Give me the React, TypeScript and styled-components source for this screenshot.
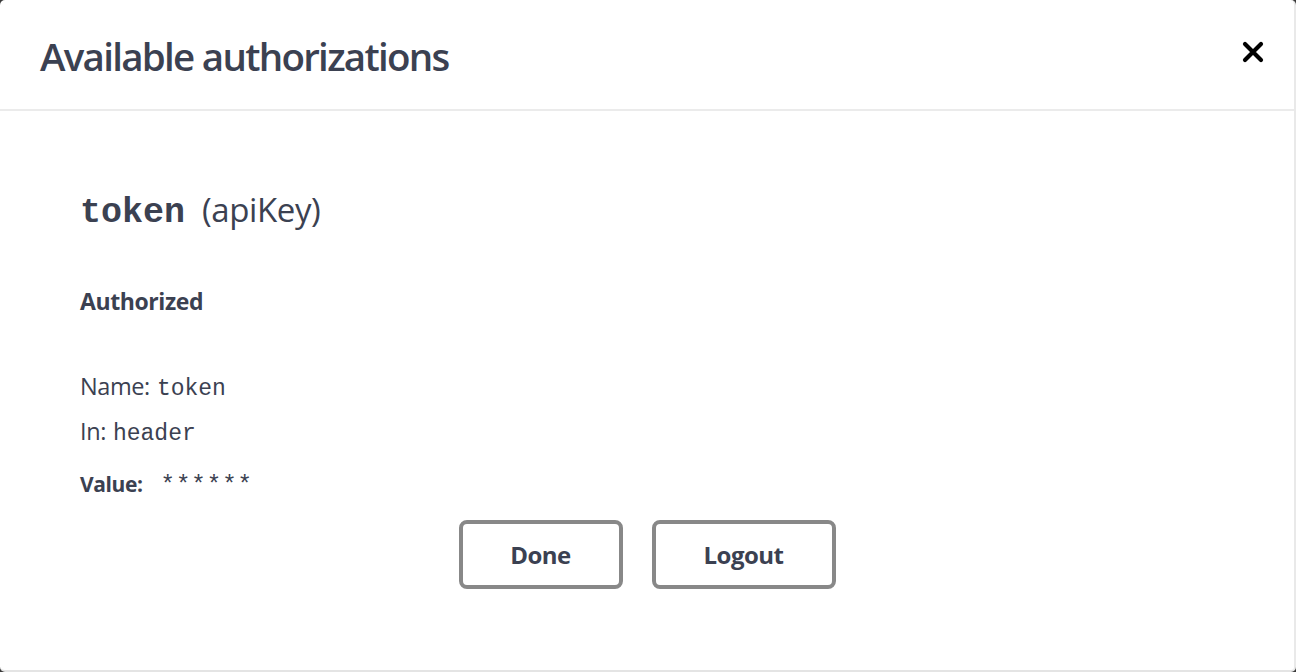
import React from "react";
import styled, { createGlobalStyle } from "styled-components";

const Global = createGlobalStyle`
  html, body { margin: 0; padding: 0; background: #3a3a3a; }
  body { width: 1296px; height: 672px; overflow: hidden; }
  * { box-sizing: border-box; }
`;

const Modal = styled.div`
  width: 1296px;
  height: 672px;
  background: #fff;
  border-radius: 5px;
  border-right: 2px solid #e9e9e9;
  border-bottom: 2px solid #e4e4e4;
  display: flex;
  flex-direction: column;
  color: #3b4151;
  font-family: "Open Sans", "Noto Sans", sans-serif;
`;

const Header = styled.div`
  height: 111px;
  flex: none;
  display: flex;
  align-items: center;
  justify-content: space-between;
  padding: 0 29px 0 40px;
  border-bottom: 2px solid #ebebeb;
`;

const Title = styled.h3`
  margin: 2px 0 0 0;
  font-size: 38.5px;
  font-weight: 600;
  letter-spacing: -1.72px;
  color: #3b4151;
`;

const CloseButton = styled.button`
  border: none;
  background: none;
  padding: 0;
  margin-bottom: 6px;
  width: 24px;
  height: 24px;
  display: flex;
  align-items: center;
  justify-content: center;
  cursor: pointer;
`;

const Content = styled.div`
  padding: 79px 80px 0 80px;
  display: flex;
  flex-direction: column;
`;

const SchemeTitle = styled.h4`
  margin: 0;
  font-size: 33px;
  font-weight: 400;
  display: flex;
  align-items: baseline;
  gap: 17px;
  line-height: 40px;
  letter-spacing: -0.4px;
`;

const Code = styled.code<{ $size?: number; $bold?: boolean; $spacing?: number }>`
  font-family: "Liberation Mono", "DejaVu Sans Mono", monospace;
  font-size: ${(p) => p.$size ?? 23}px;
  font-weight: ${(p) => (p.$bold ? 700 : 400)};
  letter-spacing: ${(p) => p.$spacing ?? 0}px;
  color: #3b4151;
`;

const Status = styled.h6`
  margin: 53px 0 0 0;
  font-size: 23px;
  font-weight: 700;
  line-height: 30px;
  letter-spacing: -0.4px;
`;

const Line = styled.p<{ $top: number }>`
  margin: ${(p) => p.$top}px 0 0 0;
  font-size: 23.5px;
  font-weight: 400;
  line-height: 30px;
  display: flex;
  align-items: baseline;
  gap: 7px;
  letter-spacing: -0.4px;
`;

const Label = styled.label`
  font-size: 21px;
  font-weight: 700;
  letter-spacing: -0.4px;
  margin-right: 11px;
`;

const Buttons = styled.div`
  display: flex;
  justify-content: center;
  gap: 29px;
  margin: 19px -80px 0 -80px;
`;

const Button = styled.button<{ $w: number }>`
  width: ${(p) => p.$w}px;
  height: 69px;
  border: 4px solid #888;
  border-radius: 8px;
  background: #fff;
  font-family: "Open Sans", "Noto Sans", sans-serif;
  font-size: 24px;
  font-weight: 700;
  letter-spacing: -0.5px;
  color: #3b4151;
  cursor: pointer;
  padding: 0;
`;

export default function App() {
  return (
    <>
      <Global />
      <Modal>
        <Header>
          <Title>Available authorizations</Title>
          <CloseButton aria-label="close">
            <svg width="22" height="22" viewBox="0 0 22 22">
              <path d="M3 3 L19 19 M19 3 L3 19" stroke="#000" strokeWidth="4.2" strokeLinecap="round" />
            </svg>
          </CloseButton>
        </Header>
        <Content>
          <SchemeTitle>
            <Code $size={35} $bold>token</Code>
            <span>(apiKey)</span>
          </SchemeTitle>
          <Status>Authorized</Status>
          <Line $top={55}>
            <span>Name:</span>
            <Code>token</Code>
          </Line>
          <Line $top={12}>
            <span>In:</span>
            <Code>header</Code>
          </Line>
          <Line $top={20}>
            <Label>Value:</Label>
            <Code $size={24} $spacing={1}>******</Code>
          </Line>
          <Buttons>
            <Button $w={164}>Done</Button>
            <Button $w={184}>Logout</Button>
          </Buttons>
        </Content>
      </Modal>
    </>
  );
}
